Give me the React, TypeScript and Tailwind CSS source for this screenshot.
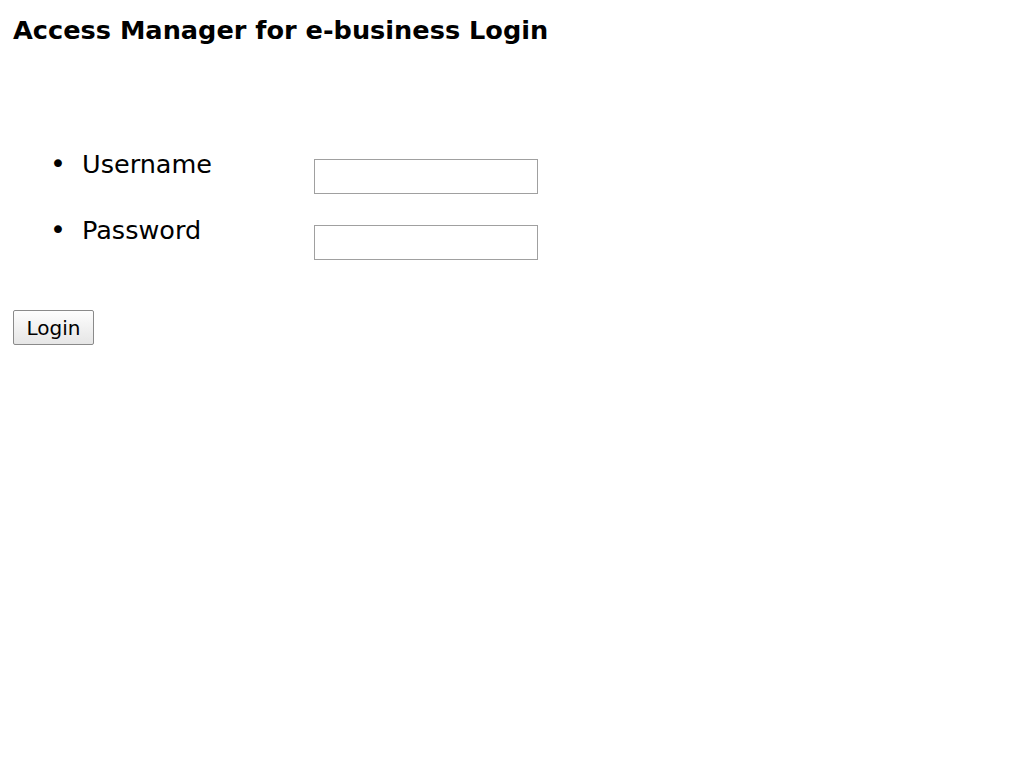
const App = () => {
    return (
        <div className="min-h-screen bg-white px-[13px] font-['DejaVu_Sans',sans-serif] text-black">
            <h1 className="pt-[15px] text-[25.6px] font-bold leading-[30px]">Access Manager for e-business Login</h1>

            <div className="mt-[104px] flex flex-col gap-[21px]">
                <div className="flex items-start">
                    <span className="w-[69px] pl-[37px] text-[27px] leading-[30px]">•</span>
                    <span className="w-[232px] text-[25.5px] leading-[30px]">Username</span>
                    <input
                        type="text"
                        className="mt-[10px] h-[35px] w-[224px] border border-[#a0a0a0] bg-white px-1 text-[20px] outline-none"
                    />
                </div>
                <div className="flex items-start">
                    <span className="w-[69px] pl-[37px] text-[27px] leading-[30px]">•</span>
                    <span className="w-[232px] text-[25.5px] leading-[30px]">Password</span>
                    <input
                        type="password"
                        className="mt-[10px] h-[35px] w-[224px] border border-[#a0a0a0] bg-white px-1 text-[20px] outline-none"
                    />
                </div>
            </div>

            <button className="mt-[50px] h-[35px] w-[81px] rounded-[2px] border border-[#8a8a8a] bg-gradient-to-b from-[#fdfdfd] to-[#e6e6e6] text-[20px] leading-none text-black">
                Login
            </button>
        </div>
    );
};

export default App;
